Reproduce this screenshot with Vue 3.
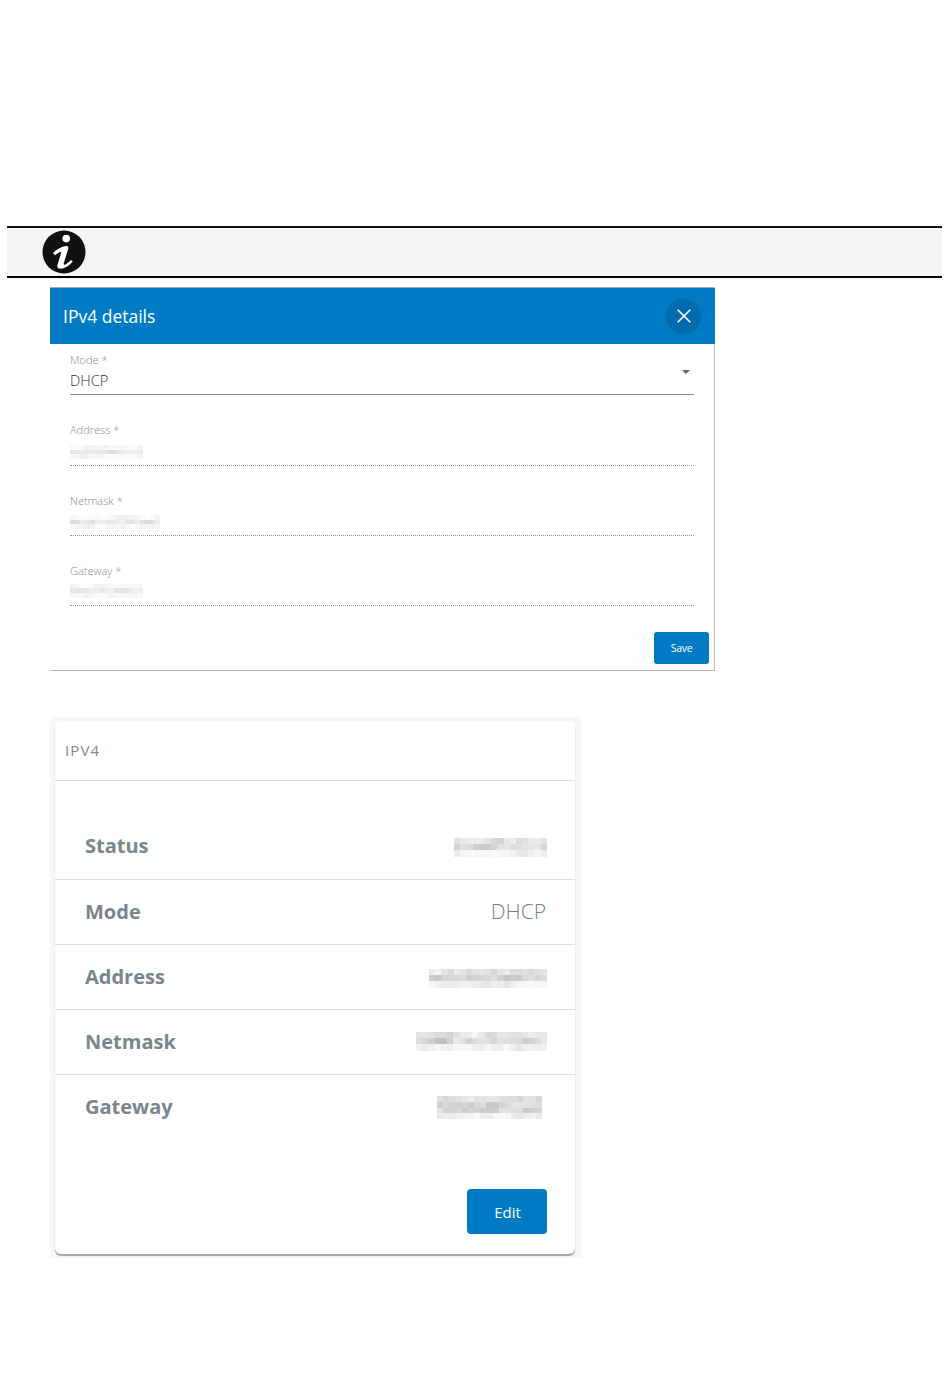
<script setup>
function mosaic(seed, cols, rows, profile) {
  const cells = []
  let s = seed
  let prev = 0.5
  for (let i = 0; i < cols * rows; i++) {
    s = (s * 9301 + 49297) % 233280
    const r = (s / 233280 + prev) / 2
    prev = s / 233280
    const row = Math.floor(i / cols)
    const [base, span] = row === 0 ? profile.top : row === rows - 1 ? profile.bottom : profile.mid
    const g = Math.round(base + r * span)
    const tint = Math.round(r * 6) - 3
    cells.push(`rgb(${g + tint},${g},${g - tint})`)
  }
  return cells
}
const soft = { top: [238, 17], mid: [214, 36], bottom: [238, 17] }
const strong = { top: [208, 40], mid: [192, 46], bottom: [226, 26] }

const fields = [
  { label: 'Address *', cols: 15, rows: 3, seed: 11, w: 73 },
  { label: 'Netmask *', cols: 18, rows: 3, seed: 29, w: 90 },
  { label: 'Gateway *', cols: 15, rows: 3, seed: 47, w: 73 }
].map(f => ({ ...f, cells: mosaic(f.seed, f.cols, f.rows, soft) }))

const rows = [
  { label: 'Status', cols: 15, rows: 3, seed: 5, w: 93, cls: 'r1' },
  { label: 'Mode', text: 'DHCP', cls: 'r2' },
  { label: 'Address', cols: 19, rows: 3, seed: 17, w: 118, cls: 'r3' },
  { label: 'Netmask', cols: 21, rows: 3, seed: 31, w: 131, cls: 'r4' },
  { label: 'Gateway', cols: 17, rows: 4, seed: 53, w: 105, cls: 'r5' }
].map(r => (r.cols ? { ...r, cells: mosaic(r.seed, r.cols, r.rows, strong) } : r))
</script>

<template>
  <div class="page">
    <div class="note">
      <svg class="info" viewBox="0 0 44 44" width="44" height="44">
        <circle cx="22" cy="22" r="21.5" fill="#111" />
        <circle cx="24.2" cy="8.6" r="3.8" fill="#fff" />
        <path d="M11 23C15 19 19.5 16.5 24 16C26 15.8 26.8 17 26.2 19L21.8 33C21.4 34.5 22.2 35 23.4 34.4C25.4 33.4 27.5 31.6 29 30L30.8 31.6C27 36 22.5 38.8 18.5 38.8C15.5 38.8 14.8 36.8 15.5 34.5L19 23.5C19.4 22 18.6 21.6 17.4 22.3C16 23 14.5 24 13 25.3Z" fill="#fff" />
      </svg>
    </div>

    <section class="dialog">
      <header class="dialog-head">
        <h2>IPv4 details</h2>
        <button class="close" aria-label="Close">
          <svg viewBox="0 0 14 14" width="16" height="16">
            <path d="M1.5 1.5l11 11M12.5 1.5l-11 11" stroke="#fff" stroke-width="1.4" fill="none" />
          </svg>
        </button>
      </header>
      <div class="form">
        <div class="field select">
          <label>Mode *</label>
          <div class="value">DHCP</div>
          <span class="caret"></span>
        </div>
        <div v-for="f in fields" :key="f.label" class="field disabled">
          <label>{{ f.label }}</label>
          <div class="value">
            <div class="mosaic" :style="{ width: f.w + 'px', gridTemplateColumns: `repeat(${f.cols}, 1fr)` }">
              <i v-for="(c, i) in f.cells" :key="i" :style="{ background: c }"></i>
            </div>
          </div>
        </div>
        <div class="actions">
          <button class="save">Save</button>
        </div>
      </div>
    </section>

    <div class="card-wrap">
      <section class="card">
        <div class="card-title">IPV4</div>
        <div class="card-body">
          <div v-for="r in rows" :key="r.label" class="row" :class="r.cls">
            <span class="key">{{ r.label }}</span>
            <span v-if="r.text" class="val">{{ r.text }}</span>
            <div v-else class="mosaic big" :style="{ width: r.w + 'px', gridTemplateColumns: `repeat(${r.cols}, 1fr)` }">
              <i v-for="(c, i) in r.cells" :key="i" :style="{ background: c }"></i>
            </div>
          </div>
        </div>
        <div class="card-actions">
          <button class="edit">Edit</button>
        </div>
      </section>
    </div>
  </div>
</template>

<style scoped>
.page {
  width: 950px;
  height: 1387px;
  padding-top: 226px;
  box-sizing: border-box;
  background: #fff;
  font-family: "Open Sans", "Noto Sans", sans-serif;
  overflow: hidden;
}
.note {
  margin: 0 8px 0 7px;
  height: 48px;
  background: #f5f5f5;
  border-top: 2px solid #111;
  border-bottom: 2px solid #000;
  display: flex;
  align-items: center;
  padding-left: 35px;
}
.info { display: block; }

.dialog {
  margin: 9px 0 0 50px;
  width: 665px;
  height: 384px;
  box-sizing: border-box;
  border-top: 1px solid #aaa;
  border-right: 1px solid #bbb;
  border-bottom: 1px solid #b4b4b4;
  display: flex;
  flex-direction: column;
}
.dialog-head {
  height: 56px;
  flex: none;
  margin-right: -1px;
  background: #007bc3;
  display: flex;
  align-items: center;
  justify-content: space-between;
  padding: 0 14px 0 13px;
}
.dialog-head h2 {
  margin: 0 0 1px;
  color: #fff;
  font-size: 17.5px;
  font-weight: 500;
}
.close {
  width: 35px;
  height: 35px;
  border: 0;
  padding: 0;
  border-radius: 50%;
  background: #006cad;
  display: flex;
  align-items: center;
  justify-content: center;
}
.form {
  padding: 9px 5px 0 20px;
  flex: 1;
  display: flex;
  flex-direction: column;
}
.field {
  position: relative;
  width: 624px;
  height: 42px;
  flex: none;
  margin-bottom: 28px;
  box-sizing: border-box;
  border-bottom: 1px dotted #999;
}
.field:nth-child(1) { margin-bottom: 29px; }
.field:nth-child(4) { margin-bottom: 26px; }
.field.select { border-bottom: 1px solid #8e8e8e; }
.field label {
  display: block;
  font-size: 11px;
  line-height: 14px;
  color: #8b8b8b;
  font-weight: 300;
}
.field:nth-child(2) label { margin-top: -1px; }
.field:nth-child(2) .value { margin-top: 5px; }
.value {
  font-size: 14.5px;
  line-height: 20px;
  margin-top: 4px;
  color: #333;
  font-weight: 300;
  height: 20px;
  display: flex;
  align-items: center;
}
.caret {
  position: absolute;
  right: 4px;
  top: 17px;
  border-left: 4px solid transparent;
  border-right: 4px solid transparent;
  border-top: 4px solid #666;
}
.mosaic {
  display: grid;
  height: 14px;
}
.field:nth-child(4) .mosaic { margin-top: -3px; }
.mosaic.big { height: 19px; }
.mosaic i { display: block; }
.r1 .mosaic.big, .r3 .mosaic.big { margin-top: 4px; }
.r5 .mosaic.big { margin: 2px 5px 0 0; height: 23px; }

.actions {
  display: flex;
  justify-content: flex-end;
}
.save {
  width: 55px;
  height: 32px;
  border: 0;
  padding: 0;
  border-radius: 3px;
  background: #007bc3;
  color: #fff;
  font: 400 10.5px "Open Sans", sans-serif;
  letter-spacing: -0.3px;
}

.card-wrap {
  margin: 46px 0 0 50px;
  width: 532px;
  height: 541px;
  box-sizing: border-box;
  background: #f6f7f7;
  padding: 4px 7px 4px 5px;
}
.card {
  height: 533px;
  background: #fff;
  border-radius: 6px;
  box-shadow: 0 2px 1px #a5a5a5;
  display: flex;
  flex-direction: column;
}
.card-title {
  height: 60px;
  flex: none;
  box-sizing: border-box;
  border-bottom: 1px solid #dedede;
  padding: 0 0 1px 10px;
  display: flex;
  align-items: center;
  font-size: 15px;
  font-weight: 400;
  letter-spacing: 1.1px;
  color: #7c8a92;
}
.card-body { display: flex; flex-direction: column; padding-top: 32px; }
.row {
  display: flex;
  align-items: center;
  justify-content: space-between;
  height: 65px;
  box-sizing: border-box;
  padding: 0 28px 2px 30px;
  border-bottom: 1px solid #dedede;
}
.row.r1 { height: 67px; }
.row.r5 { border-bottom: 0; }
.key {
  font-size: 20px;
  font-weight: 700;
  color: #78868e;
}
.val {
  font-size: 21px;
  font-weight: 300;
  color: #6f7f88;
  padding-right: 1px;
}
.card-actions {
  margin-top: auto;
  display: flex;
  justify-content: flex-end;
  padding: 0 28px 20px 0;
}
.edit {
  width: 80px;
  height: 45px;
  border: 0;
  padding: 0 0 0 1px;
  border-radius: 4px;
  background: #007bc3;
  color: #fff;
  font: 400 15px "Open Sans", sans-serif;
}
</style>

<style>
html, body { background: #fff; }
</style>
